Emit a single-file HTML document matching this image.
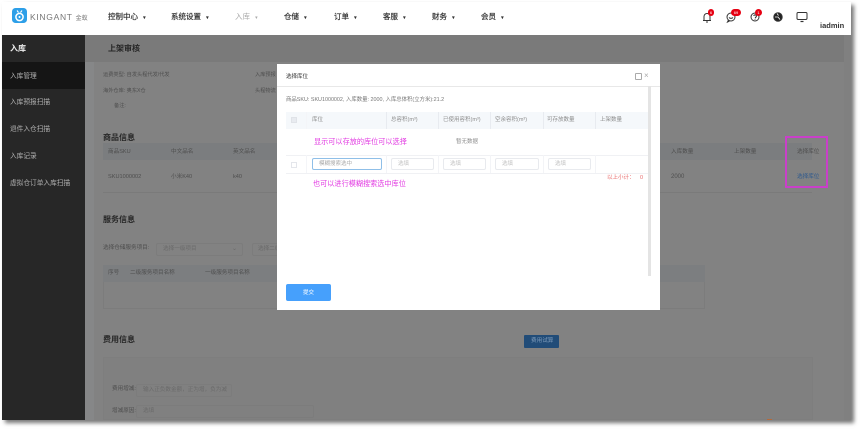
<!DOCTYPE html>
<html><head><meta charset="utf-8"><style>
html,body{margin:0;padding:0;background:#fff}
#r{position:relative;width:862px;height:430px;overflow:hidden;background:#fff;font-family:"Liberation Sans","Noto Sans CJK SC",sans-serif;filter:blur(.35px)}
#r div,#r span.t{position:absolute;box-sizing:border-box}
.t{position:absolute;white-space:nowrap;line-height:10px;height:10px;font-size:6px;color:#444}
.n{font-size:7.5px;color:#333;font-weight:400;top:12px;-webkit-text-stroke:.2px #333}
.n span{font-size:5px;margin-left:3px}
.s{font-size:6.7px;color:#b0b0b0;left:10px}
.h{font-size:8px;font-weight:700;color:#262626}
.c{font-size:5.6px;color:#4e4e4e}
.m{font-size:5.5px;color:#8c8c8c}
.p{font-size:7.15px;color:#e23ae2}
.i{background:#fff;border:1px solid #e8eaee;border-radius:2px;height:12px;top:158px}
.b{background:#e60012;color:#fff;border-radius:4px;font-size:4px;line-height:7px;height:7px;text-align:center}
</style></head><body><div id="r">
<div style="left:2px;top:2px;width:849px;height:418px;box-shadow:3px 3px 4px #777;background:#808080"></div>
<div style="left:2px;top:2px;width:849px;height:33px;background:#fff"></div>
<svg style="position:absolute;left:12px;top:8px" width="16" height="16" viewBox="0 0 16 16"><rect width="15" height="15" rx="3.5" fill="#2d9fe8"/><circle cx="7.5" cy="9" r="3.6" fill="none" stroke="#fff" stroke-width="1.5"/><circle cx="7.5" cy="9" r="1" fill="#fff"/><path d="M5 2.5L6.5 4.5M10 2.5L8.5 4.5" stroke="#fff" stroke-width="1.1"/></svg>
<span class="t" style="left:30px;top:12px;font-size:8.5px;letter-spacing:.7px;color:#777">KINGANT <span style="font-size:6px;letter-spacing:0">金蚁</span></span>
<span class="t n" style="left:108px">控制中心 <span>▾</span></span>
<span class="t n" style="left:171px">系统设置 <span>▾</span></span>
<span class="t n" style="left:235px;color:#aaa;-webkit-text-stroke:0">入库 <span>▾</span></span>
<span class="t n" style="left:284px">仓储 <span>▾</span></span>
<span class="t n" style="left:334px">订单 <span>▾</span></span>
<span class="t n" style="left:383px">客服 <span>▾</span></span>
<span class="t n" style="left:432px">财务 <span>▾</span></span>
<span class="t n" style="left:481px">会员 <span>▾</span></span>
<svg style="position:absolute;left:700px;top:10px" width="110" height="14" viewBox="0 0 110 14" fill="none" stroke="#333" stroke-width="1">
<path d="M3 10.500h8M4 10.500V6.500a3 3 0 0 1 6 0V10.500M6 12h2"/>
<circle cx="31" cy="7" r="4"/><path d="M28.500 10l-1 2 2-1M29 7.500c1 1.200 3 1.200 4 0"/>
<circle cx="55" cy="7" r="4"/><path d="M53.800 6a1.300 1.300 0 1 1 1.600 1.400V8.400M55 9.300v.6"/>
<circle cx="78" cy="7" r="4.200" fill="#222"/><path d="M75 7h3l2 2.500M77 3.500l1.500 2" stroke="#fff" stroke-width=".8"/>
<rect x="97" y="2.500" width="10" height="7" rx="1.200"/><path d="M100.500 11.500h3" stroke-width="1.200"/>
</svg>
<div class="b" style="left:708px;top:9px;width:6px">6</div>
<div class="b" style="left:731px;top:9px;width:10px">69</div>
<div class="b" style="left:755px;top:9px;width:7px">1</div>
<span class="t" style="left:820px;top:21px;font-size:7.500px;font-weight:700;color:#333">iadmin</span>

<div style="left:2px;top:35px;width:83px;height:385px;background:#272727"></div>
<div style="left:2px;top:62px;width:83px;height:27px;background:#151515"></div>
<span class="t" style="left:10px;top:44px;font-size:8px;color:#eee;font-weight:700">入库</span>
<span class="t s" style="top:71.500px">入库管理</span>
<span class="t s" style="top:98px">入库预报扫描</span>
<span class="t s" style="top:125px">退件入仓扫描</span>
<span class="t s" style="top:152px">入库记录</span>
<span class="t s" style="top:179px">虚拟仓订单入库扫描</span>

<div style="left:85px;top:35px;width:759px;height:27px;background:#7a7a7a"></div>
<div style="left:85px;top:62px;width:9px;height:358px;background:#868788"></div>
<div style="left:94px;top:62px;width:750px;height:358px;background:#828282"></div>
<span class="t h" style="left:108px;top:44px">上架审核</span>
<span class="t c" style="left:103px;top:70px;font-size:5.200px">运费类型: 自发头程代发/代发</span>
<span class="t c" style="left:255px;top:70px;font-size:5.200px">入库预报</span>
<span class="t c" style="left:103px;top:86px;font-size:5.200px">海外仓库: 奥东X仓</span>
<span class="t c" style="left:255px;top:86px;font-size:5.200px">头程物流</span>
<span class="t c" style="left:114px;top:101px;font-size:5.200px">备注:</span>
<span class="t h" style="left:103px;top:133px">商品信息</span>
<div style="left:103px;top:143px;width:709px;height:17px;background:#7b7d7f"></div>
<div style="left:103px;top:192px;width:709px;height:1px;background:#7a7a7a"></div>
<span class="t c" style="left:108px;top:147px">商品SKU</span>
<span class="t c" style="left:171px;top:147px">中文品名</span>
<span class="t c" style="left:233px;top:147px">英文品名</span>
<span class="t c" style="left:671px;top:147px">入库数量</span>
<span class="t c" style="left:734px;top:147px">上架数量</span>
<span class="t c" style="left:797px;top:147px">选择库位</span>
<span class="t c" style="left:108px;top:171.500px">SKU1000002</span>
<span class="t c" style="left:171px;top:171.500px">小米K40</span>
<span class="t c" style="left:233px;top:171.500px">k40</span>
<span class="t c" style="left:671px;top:171.500px;font-size:6px">2000</span>
<span class="t c" style="left:797px;top:171.500px;color:#2f5a8e">选择库位</span>
<div style="left:785px;top:136px;width:43px;height:52px;border:2px solid #c93fc9"></div>
<span class="t h" style="left:103px;top:215px">服务信息</span>
<span class="t c" style="left:103px;top:243px">选择仓储服务项目:</span>
<div style="left:156px;top:243px;width:87px;height:13px;border:1px solid #7c7c7c;border-radius:2px"></div>
<span class="t c" style="left:163px;top:244px;color:#6a6a6a">选择一级项目</span>
<span class="t" style="left:232px;top:244px;color:#6a6a6a">⌄</span>
<div style="left:252px;top:243px;width:40px;height:13px;border:1px solid #7c7c7c;border-radius:2px"></div>
<span class="t c" style="left:258px;top:244px;color:#6a6a6a">选择二级</span>
<div style="left:103px;top:265px;width:602px;height:44px;border:1px solid #7c7c7c"></div>
<div style="left:103px;top:265px;width:602px;height:17px;background:#7c7e80"></div>
<span class="t c" style="left:108px;top:268px">序号</span>
<span class="t c" style="left:130px;top:268px">二级服务项目名称</span>
<span class="t c" style="left:205px;top:268px">一级服务项目名称</span>
<span class="t h" style="left:103px;top:335px">费用信息</span>
<div style="left:524px;top:335px;width:35px;height:13px;background:#214c78;border-radius:1px"></div>
<span class="t c" style="left:531px;top:336px;color:#7f9cbb">费用试算</span>
<div style="left:103px;top:357px;width:710px;height:63px;background:#808080;border:1px solid #7e7e7e"></div>
<span class="t c" style="left:112px;top:384px">费用增减:</span>
<div style="left:136px;top:384px;width:96px;height:13px;border:1px solid #7c7c7c;border-radius:2px"></div>
<span class="t c" style="left:143px;top:385px;color:#6a6a6a">输入正负数金额，正为增，负为减</span>
<span class="t c" style="left:112px;top:406px">增减原因:</span>
<div style="left:136px;top:405px;width:178px;height:13px;border:1px solid #7c7c7c;border-radius:2px"></div>
<span class="t c" style="left:143px;top:406px;color:#6a6a6a">选填</span>
<div style="left:767px;top:419px;width:5px;height:1px;background:#b5693a"></div>

<div style="left:277px;top:64px;width:383px;height:246px;background:#fff"></div>
<div style="left:277px;top:86px;width:383px;height:1px;background:#e8e8e8"></div>
<span class="t" style="left:286px;top:72px;font-size:5.500px;color:#333">选择库位</span>
<div style="left:635px;top:73px;width:7px;height:7px;border:1px solid #aaa;border-radius:1px"></div>
<span class="t" style="left:644px;top:71px;font-size:8px;color:#aaa">×</span>
<span class="t" style="left:286px;top:95px;font-size:5.400px;color:#777">商品SKU: SKU1000002, 入库数量: 2000, 入库总体积(立方米):21.2</span>
<div style="left:648px;top:86px;width:3px;height:190px;background:#e4e4e4"></div>

<div style="left:286px;top:112px;width:362px;height:17px;background:#f5f8fb"></div>
<div style="left:286px;top:155px;width:362px;height:1px;background:#f0f1f4"></div>
<div style="left:286px;top:173px;width:362px;height:1px;background:#f0f1f4"></div>
<div style="left:306px;top:112px;width:1px;height:61px;background:#f4f5f8"></div>
<div style="left:306px;top:129px;width:342px;height:26px;background:#fff"></div>
<div style="left:386px;top:112px;width:1px;height:17px;background:#e8ebf0"></div>
<div style="left:438px;top:112px;width:1px;height:17px;background:#e8ebf0"></div>
<div style="left:490px;top:112px;width:1px;height:17px;background:#e8ebf0"></div>
<div style="left:543px;top:112px;width:1px;height:17px;background:#e8ebf0"></div>
<div style="left:595px;top:112px;width:1px;height:17px;background:#e8ebf0"></div>
<div style="left:386px;top:155px;width:1px;height:18px;background:#f3f4f7"></div>
<div style="left:438px;top:155px;width:1px;height:18px;background:#f3f4f7"></div>
<div style="left:490px;top:155px;width:1px;height:18px;background:#f3f4f7"></div>
<div style="left:543px;top:155px;width:1px;height:18px;background:#f3f4f7"></div>
<div style="left:595px;top:155px;width:1px;height:18px;background:#f3f4f7"></div>
<div style="left:291px;top:117px;width:6px;height:6px;background:#e8ebf0;border:1px solid #e0e3e8"></div>
<span class="t m" style="left:312px;top:115px">库位</span>
<span class="t m" style="left:391px;top:115px">总容积(m³)</span>
<span class="t m" style="left:443px;top:115px">已使用容积(m³)</span>
<span class="t m" style="left:495px;top:115px">空余容积(m³)</span>
<span class="t m" style="left:547px;top:115px">可存放数量</span>
<span class="t m" style="left:600px;top:115px">上架数量</span>
<span class="t p" style="left:314px;top:137px">显示可以存放的库位可以选择</span>
<span class="t m" style="left:456px;top:137px">暂无数据</span>
<div style="left:291px;top:162px;width:6px;height:6px;border:1px solid #e4e6eb"></div>
<div class="i" style="left:312px;width:70px;border-color:#8fbfe8"></div>
<span class="t m" style="left:319px;top:159px;color:#aaa">模糊搜索选中</span>
<div class="i" style="left:391px;width:43px"></div><span class="t m" style="left:398px;top:159px;color:#c2c2c2">选填</span>
<div class="i" style="left:443px;width:43px"></div><span class="t m" style="left:450px;top:159px;color:#c2c2c2">选填</span>
<div class="i" style="left:495px;width:44px"></div><span class="t m" style="left:502px;top:159px;color:#c2c2c2">选填</span>
<div class="i" style="left:548px;width:43px"></div><span class="t m" style="left:555px;top:159px;color:#c2c2c2">选填</span>
<span class="t p" style="left:313px;top:179px">也可以进行模糊搜索选中库位</span>
<span class="t" style="left:607px;top:173px;font-size:5.500px;color:#e86a6a">以上小计：</span>
<span class="t" style="left:640px;top:173px;font-size:5.500px;color:#e86a6a">0</span>
<div style="left:286px;top:284px;width:45px;height:17px;background:#46a0fc;border-radius:2px"></div>
<span class="t" style="left:303px;top:288px;font-size:5.500px;color:#fff">提交</span>
</div></body></html>
